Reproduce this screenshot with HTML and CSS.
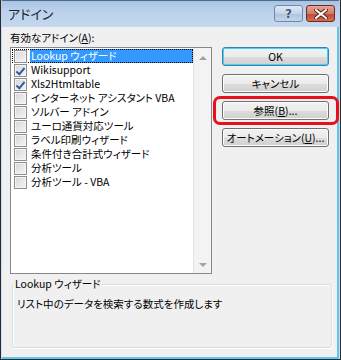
FILE: index.html
```html
<!DOCTYPE html>
<html lang="ja">

<head>
    <meta charset="UTF-8">
    <meta name="viewport" content="width=device-width, initial-scale=1.0">
    <title>アドイン</title>
    <link rel="stylesheet" href="styles.css">
</head>

<body>
    <div class="window">
        <div class="titlebar">
            <span class="title">アドイン</span>
            <div class="caption-buttons">
                <span class="cap cap-help">?</span>
                <span class="cap cap-close">
                    <svg width="14" height="10" viewBox="0 0 14 10">
                        <path d="M2 1 L12 9 M12 1 L2 9" stroke="#5a1e1a" stroke-width="4" stroke-linecap="square" />
                        <path d="M2 1 L12 9 M12 1 L2 9" stroke="#ffffff" stroke-width="2" stroke-linecap="square" />
                    </svg>
                </span>
            </div>
        </div>

        <div class="client">
            <div class="main">
                <div class="left">
                    <div class="list-label">有効なアドイン(<u>A</u>):</div>
                    <div class="listbox">
                        <ul class="items">
                            <li class="item selected"><span class="check"></span><span class="name">Lookup ウィザード</span></li>
                            <li class="item"><span class="check checked"></span><span class="name">Wikisupport</span></li>
                            <li class="item"><span class="check checked"></span><span class="name">Xls2HtmItable</span></li>
                            <li class="item"><span class="check"></span><span class="name">インターネット アシスタント VBA</span></li>
                            <li class="item"><span class="check"></span><span class="name">ソルバー アドイン</span></li>
                            <li class="item"><span class="check"></span><span class="name">ユーロ通貨対応ツール</span></li>
                            <li class="item"><span class="check"></span><span class="name">ラベル印刷ウィザード</span></li>
                            <li class="item"><span class="check"></span><span class="name">条件付き合計式ウィザード</span></li>
                            <li class="item"><span class="check"></span><span class="name">分析ツール</span></li>
                            <li class="item"><span class="check"></span><span class="name">分析ツール - VBA</span></li>
                        </ul>
                        <div class="scrollbar">
                            <span class="arrow arrow-up"></span>
                            <span class="arrow arrow-down"></span>
                        </div>
                    </div>
                </div>

                <div class="buttons">
                    <button class="btn btn-default">OK</button>
                    <button class="btn">キャンセル</button>
                    <button class="btn">参照(<u>B</u>)...</button>
                    <button class="btn">オートメーション(<u>U</u>)...</button>
                </div>
            </div>

            <div class="groupbox">
                <span class="group-title">Lookup ウィザード</span>
                <p class="group-text">リスト中のデータを検索する数式を作成します</p>
            </div>
        </div>

        <!-- red callout around the browse button -->
        <div class="callout"></div>
    </div>
</body>

</html>
```

FILE: styles.css
```css
:root {
    --client-bg: #f0f0f0;
    --frame-dark: #2b2b2b;
    --frame-cyan: #5cc4ef;
    --list-border: #828790;
    --select-blue: #3399ff;
    --ui-font: 'Liberation Sans', 'Noto Sans CJK JP', sans-serif;
}

* {
    margin: 0;
    padding: 0;
    box-sizing: border-box;
}

body {
    width: 341px;
    height: 360px;
    overflow: hidden;
    background: #ffffff;
    font-family: var(--ui-font);
    font-size: 10.5px;
    color: #000000;
}

.window {
    position: relative;
    width: 341px;
    height: 360px;
    display: flex;
    flex-direction: column;
    background: linear-gradient(#b4cbe6, #c6d8ee 30px, #cfdff1);
    border-left: 1px solid var(--frame-dark);
    border-right: 1px solid var(--frame-dark);
    border-bottom: 1px solid var(--frame-dark);
    padding: 0 1px 0 1px;
}

/* title bar */
.titlebar {
    height: 27px;
    flex: none;
    display: flex;
    align-items: flex-start;
    justify-content: space-between;
    border-top: 1px solid #4c6a8c;
    background: linear-gradient(#a9c3e3, #bcd2ec 40%, #c4d8ef);
}

.title {
    font-family: 'Noto Sans CJK JP', sans-serif;
    font-size: 13px;
    line-height: 15px;
    margin: 5px 0 0 6px;
    color: #1c2430;
    font-feature-settings: "palt";
}

.caption-buttons {
    display: flex;
    gap: 3px;
    margin: 4px 4px 0 0;
}

.cap {
    height: 17px;
    display: flex;
    align-items: center;
    justify-content: center;
    border: 1px solid #6e8aa8;
    border-radius: 3px;
}

.cap-help {
    width: 29px;
    background: linear-gradient(#dfe9f5, #c3d4e8 50%, #adc2dc 51%, #c4d6ea);
    color: #3d5576;
    font-family: 'DejaVu Sans', sans-serif;
    font-weight: bold;
    font-size: 12px;
    text-shadow: 0 0 1px #ffffff;
}

.cap-close {
    width: 29px;
    border-color: #6d2a22;
    background: linear-gradient(#e8a493, #d57a68 50%, #c04a33 51%, #cf6f54);
}

/* client area */
.client {
    flex: 1;
    display: flex;
    flex-direction: column;
    background: var(--client-bg);
    border-right: 2px solid var(--frame-cyan);
    border-bottom: 2px solid var(--frame-cyan);
    padding: 4px 3px 7px 8px;
    font-feature-settings: "palt";
}

.main {
    display: flex;
    gap: 10px;
}

.left {
    width: 202px;
}

.list-label {
    font-family: 'Noto Sans CJK JP', sans-serif;
    line-height: 14px;
    margin-bottom: 2px;
}

.listbox {
    position: relative;
    height: 227px;
    display: flex;
    background: #ffffff;
    border: 1px solid var(--list-border);
}

.items {
    list-style: none;
    flex: 1;
    padding: 1px 0 0 1px;
}

.item {
    height: 14px;
    display: flex;
    align-items: center;
}

.check {
    width: 13px;
    height: 13px;
    margin: 0 3px 0 2px;
    border: 1px solid #8f8f8f;
    background: linear-gradient(135deg, #d6d6d6, #f6f6f6);
    box-shadow: inset 0 0 0 1px #f4f4f4;
    position: relative;
}

.check.checked::after {
    content: '';
    position: absolute;
    left: 3px;
    top: 1px;
    width: 3px;
    height: 7px;
    border-right: 2px solid #3a5b9e;
    border-bottom: 2px solid #3a5b9e;
    transform: rotate(40deg);
}

.name {
    font-family: 'Noto Sans CJK JP', sans-serif;
    line-height: 14px;
    white-space: nowrap;
    padding-left: 1px;
}

.item.selected {
    outline: 1px dotted #000000;
    outline-offset: -1px;
}

.item.selected .name {
    flex: 1;
    background: var(--select-blue);
    color: #ffffff;
    border: 1px dotted #cc6600;
    border-left: none;
    line-height: 12px;
}

.scrollbar {
    width: 18px;
    flex: none;
    display: flex;
    flex-direction: column;
    justify-content: space-between;
    align-items: center;
    padding: 8px 0 6px;
    background: #f3f3f3;
    border-left: 1px solid #e2e2e2;
}

.arrow {
    width: 0;
    height: 0;
    border-left: 4px solid transparent;
    border-right: 4px solid transparent;
}

.arrow-up {
    border-bottom: 4px solid #a3a3a3;
}

.arrow-down {
    border-top: 4px solid #a3a3a3;
}

/* command buttons */
.buttons {
    display: flex;
    flex-direction: column;
    gap: 8px;
    padding-top: 16px;
}

.btn {
    width: 107px;
    height: 19px;
    padding: 0;
    white-space: nowrap;
    font-family: 'Noto Sans CJK JP', sans-serif;
    font-size: 10.5px;
    line-height: 15px;
    font-feature-settings: "palt";
    color: #000000;
    border: 1px solid #707070;
    border-radius: 3px;
    background: linear-gradient(#f2f2f2, #ebebeb 50%, #dddddd 51%, #cfcfcf);
    box-shadow: inset 0 0 0 1px #fcfcfc;
}

.btn-default {
    border-color: #3c7fb1;
    box-shadow: inset 0 0 0 1px #48d1f6;
}

/* description group */
.groupbox {
    position: relative;
    margin: 10px 0 0 2px;
    width: 320px;
    height: 64px;
    border: 1px solid #d5dfe5;
    border-radius: 3px;
    box-shadow: inset 1px 1px 0 #ffffff, 1px 1px 0 #ffffff;
    padding: 12px 4px 0 4px;
}

.group-title {
    position: absolute;
    top: -8px;
    left: 1px;
    padding: 0 1px;
    background: var(--client-bg);
    font-family: 'Noto Sans CJK JP', sans-serif;
    line-height: 14px;
}

.group-text {
    font-family: 'Noto Sans CJK JP', sans-serif;
    line-height: 14px;
}

/* annotation overlay */
.callout {
    position: absolute;
    left: 212px;
    top: 96px;
    width: 126px;
    height: 29px;
    border: 3px solid #e8101c;
    border-radius: 7px;
}
```
